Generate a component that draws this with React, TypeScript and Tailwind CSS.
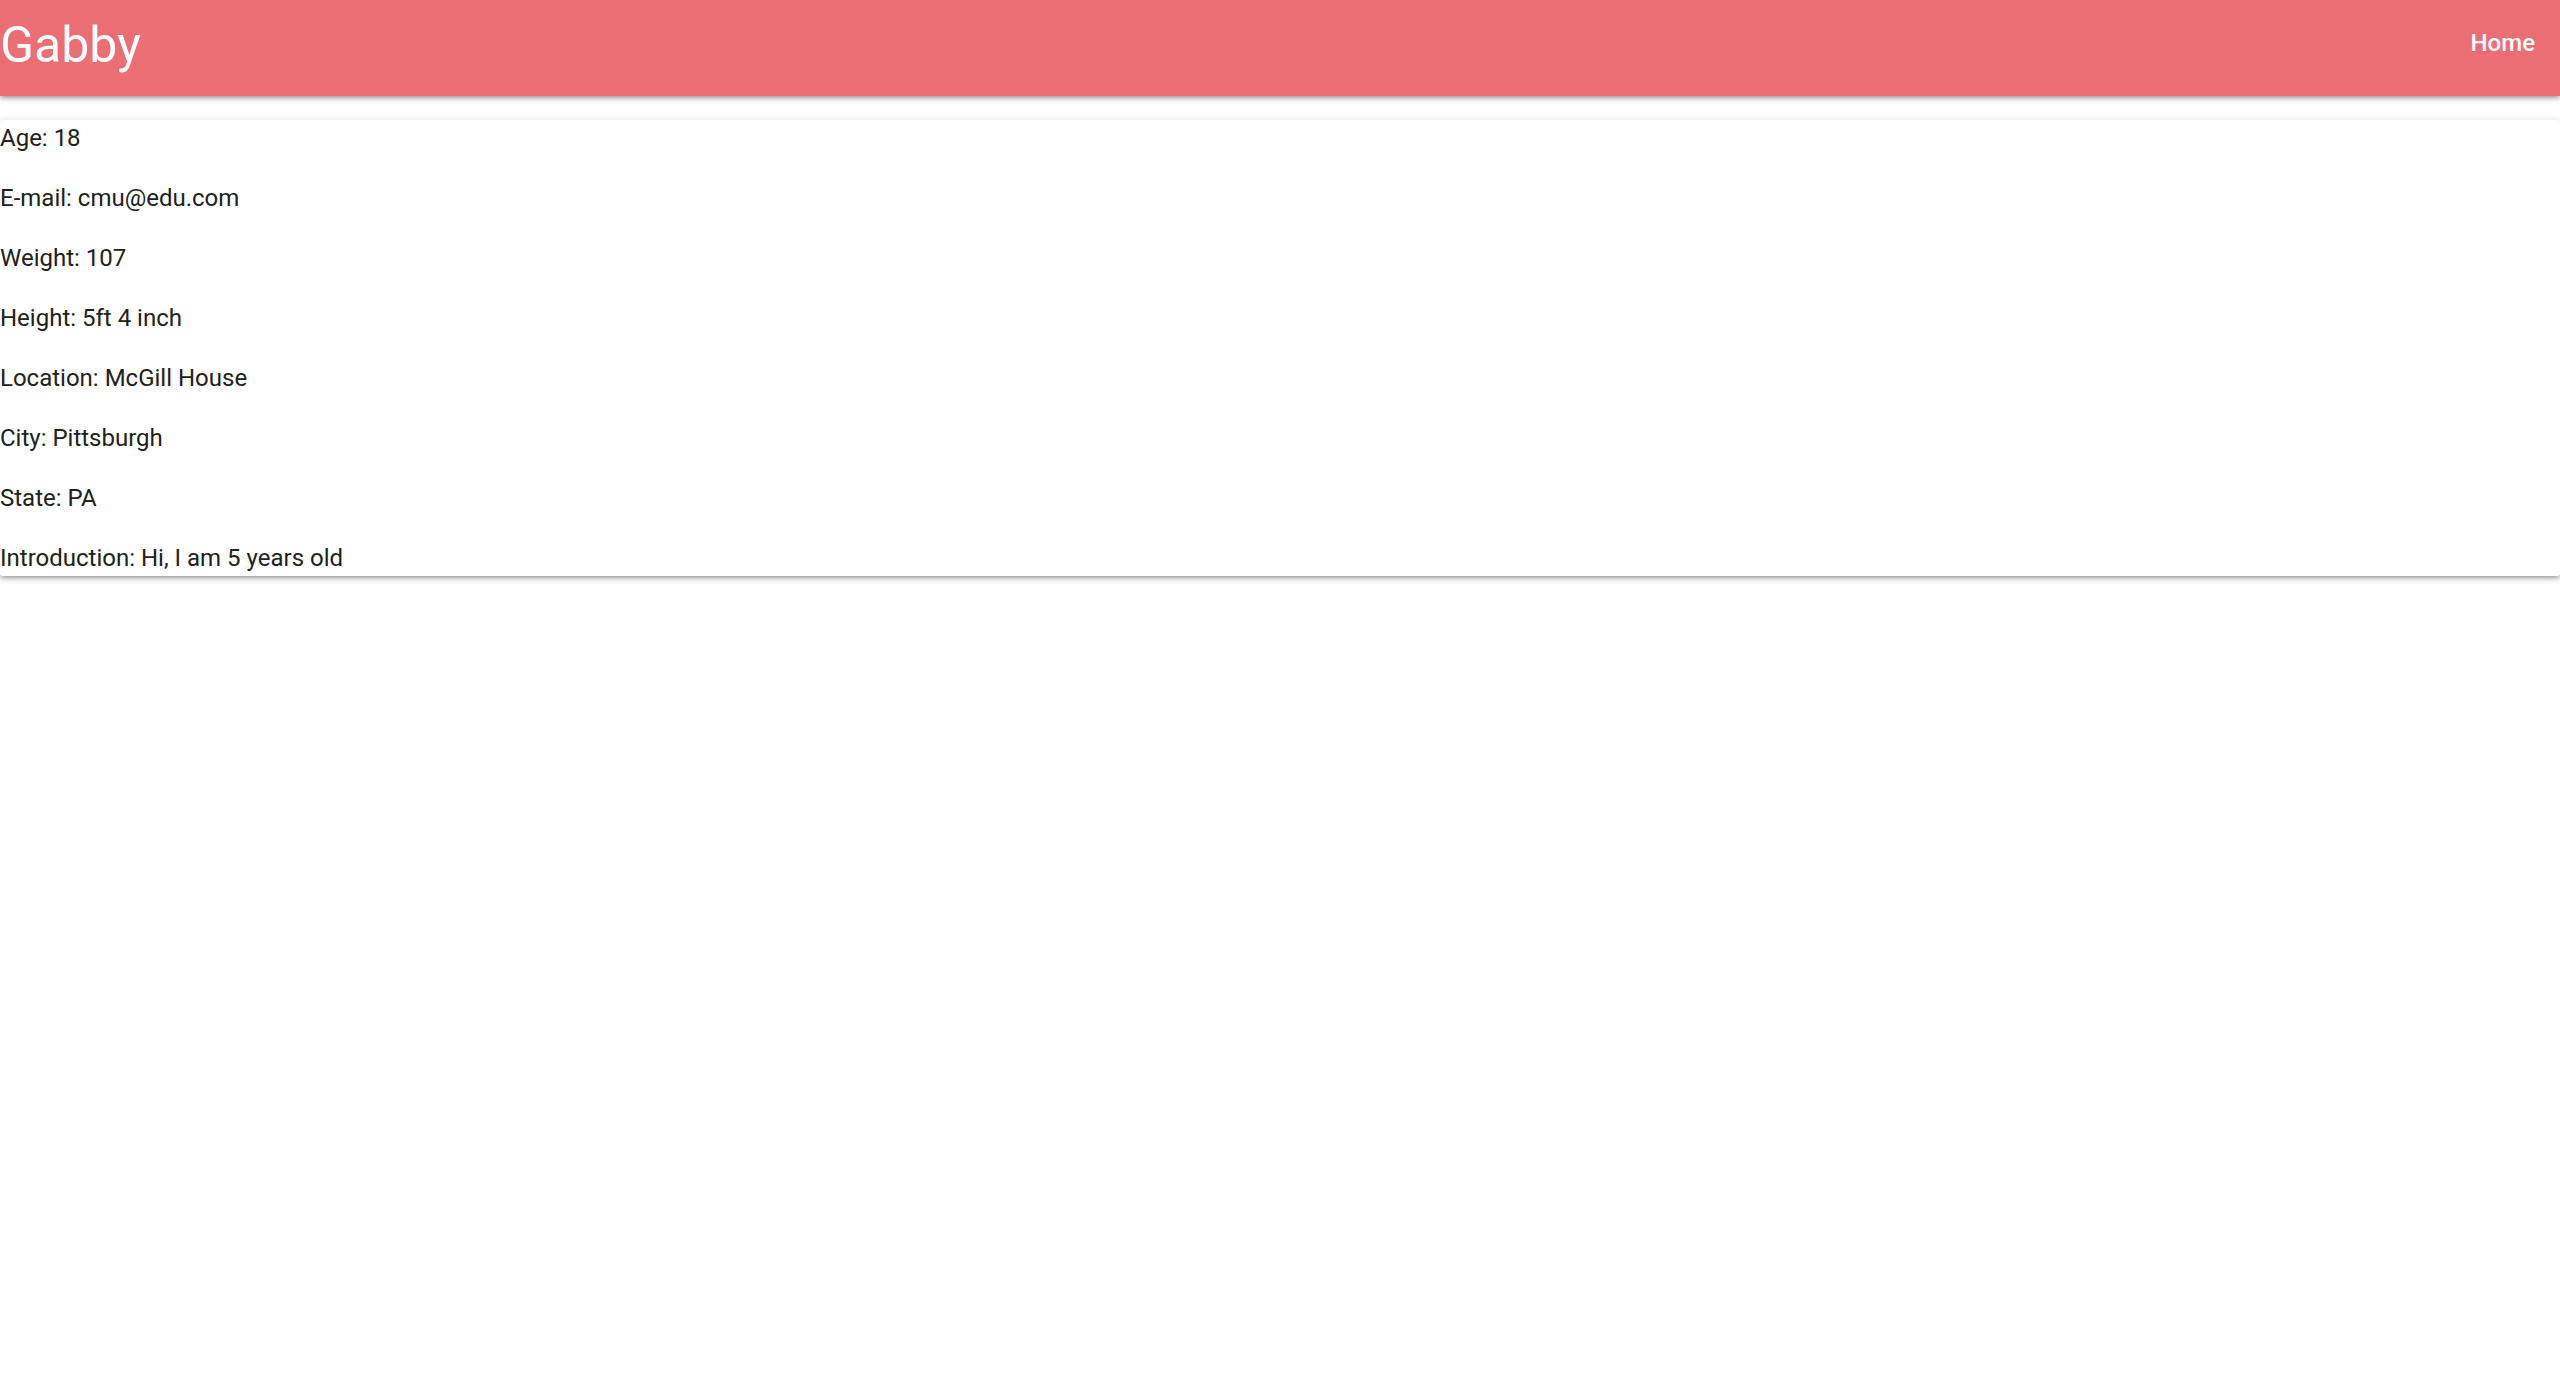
import React from "react";

const rows = [
  "Age: 18",
  "E-mail: cmu@edu.com",
  "Weight: 107",
  "Height: 5ft 4 inch",
  "Location: McGill House",
  "City: Pittsburgh",
  "State: PA",
  "Introduction: Hi, I am 5 years old",
];

export default function App() {
  return (
    <div className="min-h-screen bg-white font-['Roboto',_'Liberation_Sans',_sans-serif]">
      {/* Navbar */}
      <nav className="relative z-10 flex h-[96px] items-start justify-between bg-[#ec6e75] text-white shadow-[0_3px_3px_0_rgba(0,0,0,0.14),0_4px_2px_-3px_rgba(0,0,0,0.12),0_2px_8px_0_rgba(0,0,0,0.2)]">
        <a href="#" className="text-[50px] leading-[90px] text-white">
          Gabby
        </a>
        <a href="#" className="pr-[25px] text-[24px] font-medium leading-[86px] text-white">
          Home
        </a>
      </nav>

      {/* Profile card */}
      <div className="mt-[24px] flex flex-col gap-[24px] rounded-[3px] bg-white shadow-[0_3px_3px_0_rgba(0,0,0,0.14),0_4px_2px_-3px_rgba(0,0,0,0.12),0_2px_8px_0_rgba(0,0,0,0.2)]">
        {rows.map((row) => (
          <p key={row} className="text-[24px] leading-[36px] text-[#212121]">
            {row}
          </p>
        ))}
      </div>
    </div>
  );
}
